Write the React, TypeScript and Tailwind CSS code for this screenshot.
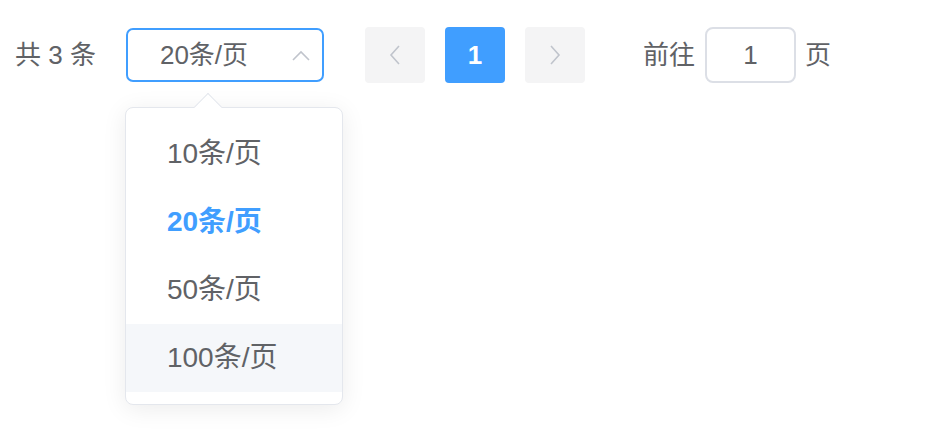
import React from "react";

const font = { fontFamily: '"Liberation Sans", "Noto Sans CJK SC", sans-serif' };

export default function App() {
  const items = ["10条/页", "20条/页", "50条/页", "100条/页"];
  return (
    <div className="w-[950px] h-[438px] bg-white relative pt-[27px]" style={font}>
      <div className="flex items-center pl-[15px] h-[56px]">
        <span className="text-[26px] text-[#606266] leading-none mr-[30px]">共 3 条</span>
        <div className="relative w-[198px] h-[54px] border-2 border-[#409eff] rounded-[7px] flex items-center mr-[41px]">
          <span className="text-[26px] text-[#606266] leading-none ml-[32px]">20条/页</span>
          <svg className="absolute left-[164px] top-[20px]" width="18" height="12" viewBox="0 0 18 12">
            <path d="M1 10 L9 2 L17 10" fill="none" stroke="#c0c4cc" strokeWidth="1.6" />
          </svg>
          {/* dropdown */}
          <div className="absolute left-[-3px] top-[77px] w-[218px] h-[298px] bg-white border border-[#e4e7ed] rounded-[8px] shadow-[0_4px_24px_rgba(0,0,0,0.08)] pt-[12px] z-10">
            <div className="absolute left-[72px] top-[-11px] w-[20px] h-[20px] bg-white border-l border-t border-[#e4e7ed] rotate-45" />
            {items.map((t, i) => (
              <div
                key={t}
                className={
                  "relative h-[68px] flex items-center pl-[41px] text-[28px] leading-none " +
                  (i === 1
                    ? "text-[#409eff] font-bold"
                    : i === 3
                    ? "text-[#606266] bg-[#f5f7fa]"
                    : "text-[#606266]")
                }
              >
                {t}
              </div>
            ))}
          </div>
        </div>
        <div className="w-[60px] h-[56px] bg-[#f4f4f5] rounded-[4px] flex items-center justify-center mr-[20px]">
          <svg width="12" height="20" viewBox="0 0 12 20">
            <path d="M10 1 L2 10 L10 19" fill="none" stroke="#c0c4cc" strokeWidth="1.6" />
          </svg>
        </div>
        <div className="w-[60px] h-[56px] bg-[#409eff] rounded-[4px] flex items-center justify-center mr-[20px] text-white font-bold text-[26px] leading-none">
          1
        </div>
        <div className="w-[60px] h-[56px] bg-[#f4f4f5] rounded-[4px] flex items-center justify-center mr-[58px]">
          <svg width="12" height="20" viewBox="0 0 12 20">
            <path d="M2 1 L10 10 L2 19" fill="none" stroke="#c0c4cc" strokeWidth="1.6" />
          </svg>
        </div>
        <span className="text-[26px] text-[#606266] leading-none mr-[10px]">前往</span>
        <div className="w-[91px] h-[56px] border-2 border-[#dcdfe6] rounded-[8px] flex items-center justify-center text-[26px] text-[#606266] leading-none mr-[9px]">
          1
        </div>
        <span className="text-[26px] text-[#606266] leading-none">页</span>
      </div>
    </div>
  );
}
